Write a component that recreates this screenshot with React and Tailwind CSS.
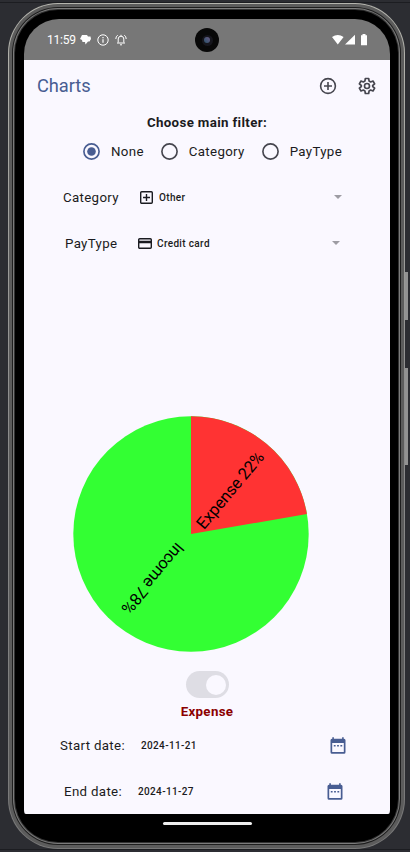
import React from 'react';

function GearIcon() {
  return (
    <svg viewBox="0 0 24 24" className="size-5 shrink-0" fill="none" stroke="#46464f" strokeWidth="2" strokeLinejoin="round">
      <path d="M10 3h4l.5 3 1.900 1.100 2.800-1.100 2 3.500-2.400 1.900v1.200l2.400 1.900-2 3.500-2.800-1.100-1.900 1.100-.5 3h-4l-.5-3-1.900-1.100-2.800 1.100-2-3.500 2.400-1.900v-1.200L2.800 9.500l2-3.500 2.800 1.100L9.500 6z" />
      <circle cx="12" cy="12" r="3" />
    </svg>
  );
}

function AddCircleIcon() {
  return (
    <svg viewBox="0 0 18 18" className="size-[18px] shrink-0" fill="none" stroke="#46464f" strokeWidth="1.600">
      <circle cx="9" cy="9" r="7.400" />
      <path d="M9 5v8M5 9h8" />
    </svg>
  );
}

function Radio({ label, checked, className }) {
  const color = checked ? '#485d92' : '#46464f';
  return (
    <div className={`flex items-center ${className || ''}`}>
      <svg viewBox="0 0 17 17" className="size-[17px] shrink-0" fill="none">
        <circle cx="8.500" cy="8.500" r="7.600" stroke={color} strokeWidth="1.650" />
        {checked && <circle cx="8.500" cy="8.500" r="4.300" fill={color} />}
      </svg>
      <span className="ml-[11px] text-[13.300px] leading-5 tracking-[0.330px]">{label}</span>
    </div>
  );
}

function SelectRow({ label, value, icon, className, labelClass, iconClass }) {
  return (
    <div className={`flex h-[46px] items-center ${className}`}>
      <span className={`shrink-0 pt-px text-[13.300px] tracking-[0.330px] ${labelClass}`}>{label}</span>
      <span className={`flex shrink-0 ${iconClass}`}>{icon}</span>
      <span className="text-[10px] font-medium tracking-[0.350px]">{value}</span>
      <svg viewBox="0 0 8 4" className="ml-auto h-1 w-2" fill="#9d9ca3"><path d="M0 0h8L4 4z" /></svg>
    </div>
  );
}

function CalendarIcon() {
  return (
    <svg viewBox="0 0 16 17" className="ml-auto h-[17px] w-4" fill="#485d92">
      <path fillRule="evenodd" d="M2.300.3h1.600v1.500h8.200V.3h1.600v1.500h.3a1.500 1.500 0 0 1 1.500 1.500V15.200a1.500 1.500 0 0 1-1.500 1.500H2A1.500 1.500 0 0 1 .5 15.200V3.300A1.500 1.500 0 0 1 2 1.800h.3zM2.200 6v9h11.600V6z" />
      <path d="M3.800 8h1.800v1.600H3.800zM7.100 8h1.800v1.600H7.100zM10.400 8h1.800v1.600h-1.800z" />
    </svg>
  );
}

function DateRow({ label, value, className, labelClass }) {
  return (
    <div className={`flex h-[46px] shrink-0 items-center ${className}`}>
      <span className={`shrink-0 pt-px text-[13.300px] tracking-[0.330px] ${labelClass}`}>{label}</span>
      <span className="text-[10px] font-medium tracking-[0.350px]">{value}</span>
      <CalendarIcon />
    </div>
  );
}

function StatusBar() {
  return (
    <div className="relative flex h-[41px] shrink-0 items-center bg-[#777777] pr-[22px] pl-[23px] text-white">
      <span className="w-[29px] text-[12px] leading-none tracking-[-0.200px] whitespace-nowrap">11:59</span>
      <svg viewBox="0 0 11 10" className="ml-1 h-2.500 w-[11px]" fill="white">
        <path d="M2 0h5l1 1.500h2.500L11 4 9.500 6.500H8L5.500 9.500 5 7H2.500L2 5 0 4z" />
      </svg>
      <svg viewBox="0 0 12 12" className="ml-[6px] size-3" fill="none" stroke="white">
        <circle cx="6" cy="6" r="5.200" /><path d="M6 5.200v3.600M6 3v1.200" strokeWidth="1.200" />
      </svg>
      <svg viewBox="0 0 12 12" className="ml-[6px] size-3" fill="none" stroke="white">
        <path d="M3.200 8.500V5a2.800 2.800 0 0 1 5.600 0v3.500M2 9h8M6 .8v1.500M5 10.800h2M.8 5Q.8 2.500 2.700 1.200M11.200 5q0-2.500-1.900-3.800" />
      </svg>
      <svg viewBox="0 0 36 12" className="ml-auto h-3 w-9" fill="white">
        <path d="M0 3Q5.800-.8 11.600 3L5.800 10.500zM13 10.500 23 .8v9.700zM30.500 0h3v1.200h1.500v10h-6v-10h1.500z" />
      </svg>
      <div className="absolute top-[9px] left-[171px] flex size-[24px] items-center justify-center rounded-full bg-[#080808]">
        <span className="flex size-[11px] items-center justify-center rounded-full bg-[#16161d]">
          <span className="size-[6px] rounded-full bg-linear-to-tr from-[#24526a] to-[#6a5a85]" />
        </span>
      </div>
    </div>
  );
}

function PieChart() {
  return (
    <svg viewBox="0 0 236 236" className="mt-[150px] ml-[49px] size-[236px] shrink-0">
      <circle cx="118" cy="118" r="117.700" fill="#33ff33" />
      <path d="M118 118V.3A117.700 117.700 0 0 1 233.900 98Z" fill="#ff3333" />
      <g fontSize="16.500" fill="#000">
        <text transform="translate(131 114.200) rotate(-50)" textLength="95" lengthAdjust="spacing">Expense 22%</text>
        <text transform="translate(103.500 125.500) rotate(130)" textLength="87" lengthAdjust="spacing">Income 78%</text>
      </g>
    </svg>
  );
}

const categoryIcon = (
  <svg viewBox="0 0 13 13" className="size-[13px]" fill="none" stroke="#1a1b21" strokeWidth="1.400">
    <rect x=".7" y=".7" width="11.600" height="11.600" rx="1" /><path d="M6.500 3v7M3 6.500h7" />
  </svg>
);

const cardIcon = (
  <svg viewBox="0 0 14 11" className="h-[11px] w-3.500" fill="none" stroke="#1a1b21" strokeWidth="1.400">
    <rect x=".7" y=".7" width="12.600" height="9.600" rx="1" /><path d="M1 4h12" strokeWidth="2.500" />
  </svg>
);

export default function App() {
  return (
    <div className="relative h-[852px] w-[410px] overflow-hidden bg-[#2c2d32] pt-[3px] pl-2 font-[Roboto,sans-serif] text-[#1a1b21]">
      <div className="absolute top-0 left-0 h-[3px] w-full border-b border-[#1c1d21]" />
      <div className="absolute bottom-0 left-0 h-[3px] w-full border-t border-[#1c1d21]" />
      <div className="absolute top-[272px] left-[404px] h-[48px] w-1 bg-[#929292]" />
      <div className="absolute top-[368px] left-[404px] h-[97px] w-1 bg-[#929292]" />
      <div className="relative h-[846px] w-[397px] rounded-[50px] bg-linear-to-b from-[#b5b5ae] via-[#8c8c8c] to-[#777777] p-px">
        <div className="h-full rounded-[49px] bg-[#5c5c5c] p-[3px]">
          <div className="h-full rounded-[46px] bg-[#1e1e1e] p-px">
            <div className="h-full rounded-[45px] bg-[#7b7b7b] p-px">
              <div className="h-full rounded-[44px] bg-[#333333] p-px">
                <div className="h-full rounded-[43px] bg-black pt-[9px] pl-[9px]">
                  <div className="flex h-[811px] w-[366px] flex-col overflow-hidden rounded-t-[35px] rounded-b-[20px] bg-black">
                    <StatusBar />
                    <main className="flex h-[754px] shrink-0 flex-col rounded-b-[2px] bg-[#faf8ff]">
                      <header className="flex h-[52px] shrink-0 items-center px-[13px]">
                        <h1 className="text-[18.300px] leading-6 tracking-[-0.050px] text-[#485d92]">Charts</h1>
                        <div className="ml-auto flex items-center gap-5"><AddCircleIcon /><GearIcon /></div>
                      </header>
                      <h2 className="h-5 shrink-0 text-center text-[13.300px] leading-[21px] font-bold tracking-[0.350px]">Choose main filter:</h2>
                      <div className="flex h-[39px] shrink-0 items-center pl-[59px]">
                        <Radio label="None" checked />
                        <Radio label="Category" className="ml-[17px]" />
                        <Radio label="PayType" className="ml-[17px]" />
                      </div>
                      <div className="mt-[3px] shrink-0">
                        <SelectRow label="Category" value="Other" icon={categoryIcon} className="pr-12 pl-[39px]" labelClass="w-[77px]" iconClass="w-[19px]" />
                        <SelectRow label="PayType" value="Credit card" icon={cardIcon} className="pr-[50px] pl-[41px]" labelClass="w-[73px]" iconClass="w-[19px]" />
                      </div>
                      <PieChart />
                      <div className="mt-[19px] flex h-[27px] w-[43px] shrink-0 items-center justify-end self-center rounded-full bg-[#dedde4] pr-[3px]">
                        <span className="size-[20px] rounded-full bg-[#faf8ff]" />
                      </div>
                      <p className="mt-1 h-5 shrink-0 text-center text-[13.300px] leading-5 font-bold tracking-[0.330px] text-[#8b0000]">Expense</p>
                      <DateRow label="Start date:" value="2024-11-21" className="pr-[44px] pl-9" labelClass="w-[81px]" />
                      <DateRow label="End date:" value="2024-11-27" className="pr-[47px] pl-10" labelClass="w-[74px]" />
                    </main>
                    <div className="mt-2 h-[3px] w-[89px] shrink-0 self-center rounded-full bg-[#eeeeee]" />
                  </div>
                </div>
              </div>
            </div>
          </div>
        </div>
      </div>
    </div>
  );
}
